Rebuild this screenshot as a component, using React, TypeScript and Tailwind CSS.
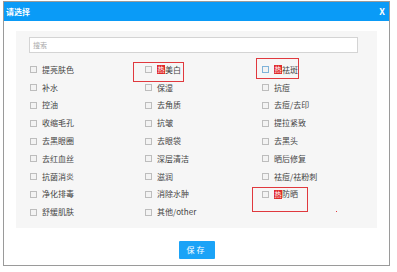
import React from "react";

type Item = { label: string; hot?: boolean; mark?: "a" | "b" | "c"; focus?: boolean };

const items: Item[] = [
  { label: "提亮肤色" },
  { label: "美白", hot: true, mark: "a" },
  { label: "祛斑", hot: true, mark: "b", focus: true },
  { label: "补水" },
  { label: "保湿" },
  { label: "抗痘" },
  { label: "控油" },
  { label: "去角质" },
  { label: "去痘/去印" },
  { label: "收缩毛孔" },
  { label: "抗皱" },
  { label: "提拉紧致" },
  { label: "去黑眼圈" },
  { label: "去眼袋" },
  { label: "去黑头" },
  { label: "去红血丝" },
  { label: "深层清洁" },
  { label: "晒后修复" },
  { label: "抗菌消炎" },
  { label: "滋润" },
  { label: "祛痘/祛粉刺" },
  { label: "净化排毒" },
  { label: "消除水肿" },
  { label: "防晒", hot: true, mark: "c" },
  { label: "舒缓肌肤" },
  { label: "其他/other" },
];

const Option = ({ item }: { item: Item }) => (
  <label className="relative flex items-center h-[17.8px] cursor-pointer">
    {item.mark === "a" && (
      <span className="absolute left-[-12px] top-[1px] w-[51px] h-[20px] border border-[#e0393e]" />
    )}
    {item.mark === "b" && (
      <span className="absolute left-[-6px] top-[-3px] w-[43px] h-[21px] border border-[#e0393e]" />
    )}
    {item.mark === "c" && (
      <>
        <span className="absolute left-[-10px] top-[1px] w-[56px] h-[25px] border border-[#e0393e]" />
        <span className="absolute left-[74px] top-[25px] w-[1px] h-[1px] bg-[#e0393e]" />
      </>
    )}
    <span
      className={`w-[7px] h-[7px] border bg-[#f3f3f3] shrink-0 ${
        item.focus ? "border-[#7fb3d9]" : "border-[#bdbdbd]"
      }`}
    />
    <span className="ml-[5px] flex items-center text-[8px] leading-none text-[#444]">
      {item.hot && (
        <span className="inline-flex items-center justify-center w-[8px] h-[9px] bg-[#e02a2a] text-white text-[7px] leading-none">
          热
        </span>
      )}
      {item.label}
    </span>
  </label>
);

export default function App() {
  return (
    <div
      className="w-[397px] h-[272px] bg-white overflow-hidden pt-[1px] pl-[3px]"
      style={{ fontFamily: '"Noto Sans CJK SC", "Liberation Sans", sans-serif' }}
    >
      <div className="w-[387px] h-[265px] border border-[#9a9a9a] bg-white flex flex-col">
        <div className="h-[19px] bg-[#0a9bf7] flex items-center justify-between pl-[2px] pr-[4px] text-white font-bold">
          <span className="text-[8px] leading-none">请选择</span>
          <span className="text-[9px] leading-none">X</span>
        </div>
        <div className="mt-[10px] mx-[12px] h-[197px] bg-[#f6f6f6] pt-[6px]">
          <div className="ml-[13px] w-[329px] h-[16px] border border-[#d4d4d4] bg-white flex items-center pl-[3px] text-[7px] text-[#aaa]">
            搜索
          </div>
          <div className="mt-[8px] ml-[14px] grid grid-cols-[115px_117px_1fr]">
            {items.map((it) => (
              <Option key={it.label} item={it} />
            ))}
          </div>
        </div>
        <div className="mt-[13px] flex justify-center">
          <button className="w-[36px] h-[18px] bg-[#1ba3f7] text-white text-[8px] tracking-[2px] leading-none rounded-[1px]">
            保存
          </button>
        </div>
      </div>
    </div>
  );
}
